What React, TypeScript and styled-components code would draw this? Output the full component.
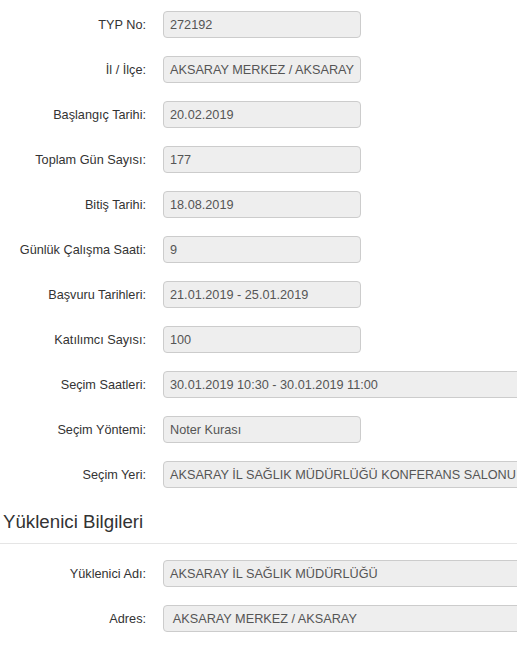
import styled, { createGlobalStyle } from "styled-components";

const GlobalStyle = createGlobalStyle`
	html, body {
		margin: 0;
		padding: 0;
		background: #fff;
		overflow: hidden;
	}
	body {
		font-family: "Liberation Sans", Arial, sans-serif;
		font-size: 12.7px;
		color: #333;
	}
`;

interface FieldProps {
	wide?: boolean;
}

const Page = styled.div`
	width: 517px;
	padding-top: 11px;
`;

const Form = styled.div`
	display: flex;
	flex-direction: column;
	gap: 18px;
`;

const Row = styled.div`
	display: grid;
	grid-template-columns: 146px auto;
	column-gap: 17px;
	align-items: center;
`;

const Label = styled.label`
	text-align: right;
	font-size: 12.7px;
	color: #333;
	white-space: nowrap;
`;

const Field = styled.div<FieldProps>`
	box-sizing: border-box;
	width: ${(props) => (props.wide ? "390px" : "198px")};
	height: 27px;
	padding: 0 6px;
	display: flex;
	align-items: center;
	background: #eee;
	border: 1px solid #ccc;
	border-radius: 4px;
	color: #555;
	font-size: 12.7px;
	white-space: pre;
	overflow: hidden;
`;

const Heading = styled.h4`
	margin: 23px 0 0;
	padding: 0 0 0 3px;
	font-size: 18.7px;
	font-weight: 400;
	color: #333;
	line-height: 22px;
	padding-bottom: 10px;
	border-bottom: 1px solid #e5e5e5;
`;

const SubForm = styled(Form)`
	margin-top: 16px;
`;

const details: [string, string, boolean?][] = [
	["TYP No:", "272192"],
	["İl / İlçe:", "AKSARAY MERKEZ / AKSARAY"],
	["Başlangıç Tarihi:", "20.02.2019"],
	["Toplam Gün Sayısı:", "177"],
	["Bitiş Tarihi:", "18.08.2019"],
	["Günlük Çalışma Saati:", "9"],
	["Başvuru Tarihleri:", "21.01.2019 - 25.01.2019"],
	["Katılımcı Sayısı:", "100"],
	["Seçim Saatleri:", "30.01.2019 10:30 - 30.01.2019 11:00", true],
	["Seçim Yöntemi:", "Noter Kurası"],
	["Seçim Yeri:", "AKSARAY İL SAĞLIK MÜDÜRLÜĞÜ KONFERANS SALONU", true],
];

const contractor: [string, string, boolean?][] = [
	["Yüklenici Adı:", "AKSARAY İL SAĞLIK MÜDÜRLÜĞÜ", true],
	["Adres:", " AKSARAY MERKEZ / AKSARAY", true],
];

const App = () => {
	return (
		<Page>
			<GlobalStyle />
			<Form>
				{details.map(([label, value, wide]) => (
					<Row key={label}>
						<Label>{label}</Label>
						<Field wide={wide}>{value}</Field>
					</Row>
				))}
			</Form>
			<Heading>Yüklenici Bilgileri</Heading>
			<SubForm>
				{contractor.map(([label, value, wide]) => (
					<Row key={label}>
						<Label>{label}</Label>
						<Field wide={wide}>{value}</Field>
					</Row>
				))}
			</SubForm>
		</Page>
	);
};

export default App;
